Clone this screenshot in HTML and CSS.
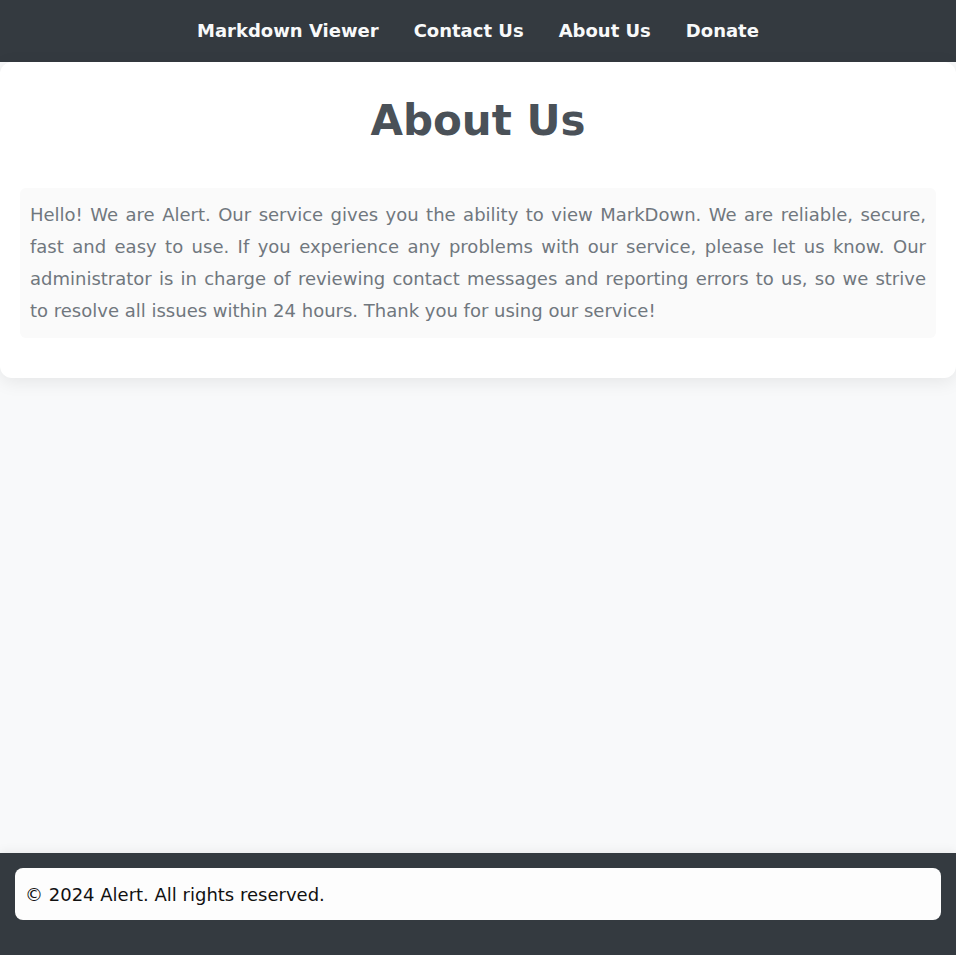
FILE: index.html
```html
<!DOCTYPE html>
<html lang="en">
<head>
<meta charset="utf-8">
<title>About Us</title>
<link rel="stylesheet" href="styles.css">
</head>
<body>
<div class="page">
  <nav class="topnav">
    <a href="#">Markdown Viewer</a>
    <a href="#">Contact Us</a>
    <a href="#">About Us</a>
    <a href="#">Donate</a>
  </nav>
  <main class="card">
    <h1 class="title">About Us</h1>
    <p class="about">Hello! We are Alert. Our service gives you the ability to view MarkDown. We are reliable, secure, fast and easy to use. If you experience any problems with our service, please let us know. Our administrator is in charge of reviewing contact messages and reporting errors to us, so we strive to resolve all issues within 24 hours. Thank you for using our service!</p>
  </main>
  <footer class="footer">
    <div class="footer-box">© 2024 Alert. All rights reserved.</div>
  </footer>
</div>
</body>
</html>
```
FILE: styles.css
```css
html, body {
  margin: 0;
  padding: 0;
}
body {
  background: #f8f9fa;
  font-family: "DejaVu Sans", sans-serif;
}
.page {
  min-height: 100vh;
  display: flex;
  flex-direction: column;
}
.topnav {
  background: #343a40;
  height: 62px;
  display: flex;
  justify-content: center;
  align-items: center;
  gap: 35px;
}
.topnav a {
  color: #f8f9fa;
  text-decoration: none;
  font-weight: bold;
  font-size: 18px;
  line-height: 22px;
}
.card {
  background: #ffffff;
  border-radius: 12px;
  box-shadow: 0 4px 18px rgba(0, 0, 0, 0.08);
  padding: 31px 20px 40px;
}
.title {
  margin: 0 0 39px;
  text-align: center;
  font-size: 42px;
  line-height: 56px;
  font-weight: bold;
  color: #4a5158;
}
.about {
  margin: 0;
  background: #fafafa;
  border-radius: 6px;
  padding: 11px 10px 11px;
  font-size: 18px;
  line-height: 32px;
  color: #70777e;
  text-align: justify;
}
.footer {
  margin-top: auto;
  background: #343a40;
  box-shadow: 0 -2px 10px rgba(0, 0, 0, 0.06);
  padding: 15px 15px 35px;
}
.footer-box {
  background: #fdfdfd;
  border-radius: 8px;
  height: 52px;
  display: flex;
  align-items: center;
  padding: 0 10px;
  font-size: 18px;
  color: #111111;
}
```
